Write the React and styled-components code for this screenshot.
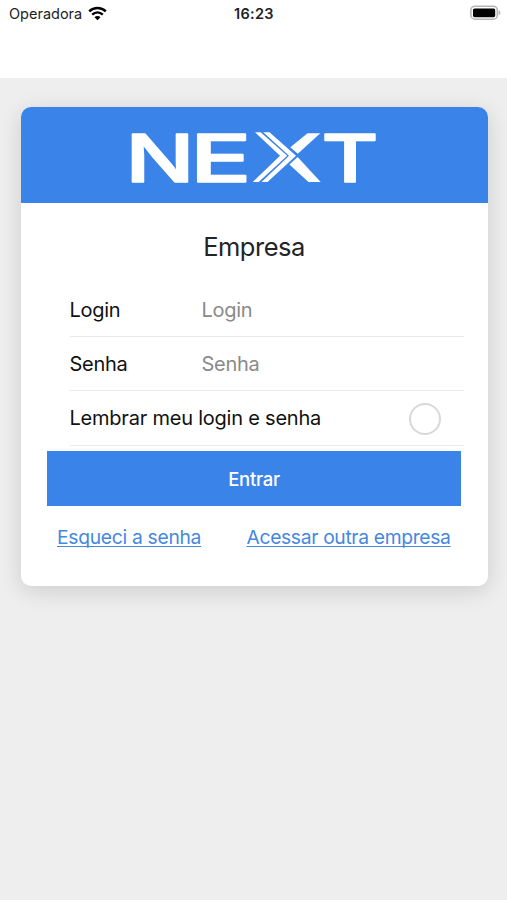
import styled, { createGlobalStyle } from "styled-components";

const GlobalStyle = createGlobalStyle`
  * {
    box-sizing: border-box;
  }
  body {
    margin: 0;
    background: #eeeeee;
    font-family: Inter, "Liberation Sans", sans-serif;
  }
`;

const Screen = styled.div`
  min-height: 900px;
  background: #eeeeee;
`;

const Header = styled.header`
  height: 78px;
  padding: 3px 6px 0 9px;
  background: #fff;
`;

const StatusBar = styled.div`
  display: grid;
  grid-template-columns: 1fr auto 1fr;
  align-items: center;
  height: 20px;
  font-size: 14.5px;
  color: #222;
`;

const Carrier = styled.div`
  display: flex;
  align-items: center;
  gap: 6px;
`;

const Clock = styled.div`
  padding-right: 2px;
  font-weight: 600;
  letter-spacing: 0.3px;
`;

const Battery = styled.div`
  display: flex;
  justify-content: flex-end;
`;

const Card = styled.main`
  width: 467px;
  height: 479px;
  margin: 29px 0 0 20.5px;
  border-radius: 10px;
  overflow: hidden;
  background: #fff;
  box-shadow: 0 5px 22px rgba(0, 0, 0, 0.14);
`;

const Banner = styled.div`
  display: flex;
  justify-content: center;
  height: 95.5px;
  background: #3a83e8;
`;

const Title = styled.h1`
  margin: 0;
  height: 80.5px;
  padding-top: 28px;
  font-size: 25.5px;
  font-weight: 400;
  line-height: 32px;
  letter-spacing: -0.5px;
  text-align: center;
  color: #222428;
`;

const Field = styled.label`
  display: flex;
  align-items: center;
  height: ${(props) => props.$height || "54px"};
  margin: 0 24px 0 49px;
  padding-right: 23px;
  border-bottom: 1px solid #e9e9e9;
  font-size: 20px;
  letter-spacing: ${(props) => props.$spacing || "-0.3px"};
  color: #111;
`;

const Label = styled.span`
  flex: ${(props) => (props.$wide ? "1" : "0 0 132px")};
`;

const Input = styled.input`
  flex: 1;
  min-width: 0;
  padding: 0;
  border: 0;
  outline: 0;
  background: transparent;
  font: inherit;
  letter-spacing: inherit;
  &::placeholder {
    color: #8a8a8a;
    opacity: 1;
  }
`;

const Radio = styled.span`
  width: 32px;
  height: 32px;
  margin-top: 1px;
  border: 2px solid #d8d8d8;
  border-radius: 50%;
`;

const Submit = styled.button`
  display: block;
  width: 414px;
  height: 55px;
  margin: 5px 0 0 26.5px;
  padding: 0;
  border: 0;
  background: #3a83e8;
  color: #fff;
  font: 500 18.5px Inter, sans-serif;
  letter-spacing: -0.3px;
`;

const Links = styled.nav`
  display: flex;
  justify-content: space-between;
  padding: 18px 37px 0 36.5px;
`;

const Link = styled.a`
  color: #4588e0;
  font-size: 19.3px;
  line-height: 26px;
  letter-spacing: ${(props) => props.$spacing};
  text-decoration: underline;
  text-decoration-thickness: 1.3px;
  text-decoration-skip-ink: none;
  text-underline-offset: 1.5px;
`;

const Logo = () => (
  <svg width="266" height="95" viewBox="121 107 266 95" fill="#fff">
    <g
      fontFamily="Inter"
      fontSize="66.5"
      fontWeight="500"
      stroke="#fff"
      strokeWidth="1.6"
      strokeLinejoin="round"
    >
      <text x="125.5" y="181.5" textLength="69" lengthAdjust="spacingAndGlyphs">N</text>
      <text x="190" y="181.5" textLength="61.5" lengthAdjust="spacingAndGlyphs">E</text>
      <text x="321.5" y="181.5" textLength="57" lengthAdjust="spacingAndGlyphs">T</text>
    </g>
    <path d="M255 132.3h5.7L287.2 155.8 258.7 182h-6L280 155.8z" />
    <path d="M263.3 132.3h6.2L296 155.8 267.5 182h-6L289 155.8z" />
    <path d="M307.5 133.3H320.3L297.8 153.8 290.3 147.2z" />
    <path d="M297.6 157L320.7 182H308.5L289.4 164.6z" />
  </svg>
);

const WifiIcon = () => (
  <svg width="19" height="15" viewBox="0 0 19 15" fill="none" stroke="#000">
    <path d="M1.2 5.3C6 0.8 13 0.8 17.8 5.3" strokeWidth="2.5" />
    <path d="M4.2 8.6c3.1-2.9 7.5-2.9 10.6 0" strokeWidth="2.4" />
    <path d="M6.5 11.2c1.6-1.5 4.4-1.5 6 0L9.5 14.2z" fill="#000" stroke="none" />
  </svg>
);

const BatteryIcon = () => (
  <svg width="31" height="16" viewBox="0 0 31 16">
    <rect x="0.9" y="1.2" width="26.4" height="13" rx="4" fill="#fff" stroke="#b5b5b5" strokeWidth="1.6" />
    <rect x="3" y="3.4" width="22.2" height="8.8" rx="1.6" />
    <path d="M28.6 5.2c2.4 1 2.4 4 0 5z" fill="#b5b5b5" />
  </svg>
);

const App = () => {
  return (
    <Screen>
      <GlobalStyle />
      <Header>
        <StatusBar>
          <Carrier>
            Operadora
            <WifiIcon />
          </Carrier>
          <Clock>16:23</Clock>
          <Battery>
            <BatteryIcon />
          </Battery>
        </StatusBar>
      </Header>
      <Card>
        <Banner>
          <Logo />
        </Banner>
        <Title>Empresa</Title>
        <Field>
          <Label>Login</Label>
          <Input placeholder="Login" />
        </Field>
        <Field>
          <Label>Senha</Label>
          <Input type="password" placeholder="Senha" />
        </Field>
        <Field $height="55px" $spacing="-0.22px">
          <Label $wide>Lembrar meu login e senha</Label>
          <Radio />
        </Field>
        <Submit>Entrar</Submit>
        <Links>
          <Link $spacing="-0.3px">Esqueci a senha</Link>
          <Link $spacing="-0.35px">Acessar outra empresa</Link>
        </Links>
      </Card>
    </Screen>
  );
};

export default App;
